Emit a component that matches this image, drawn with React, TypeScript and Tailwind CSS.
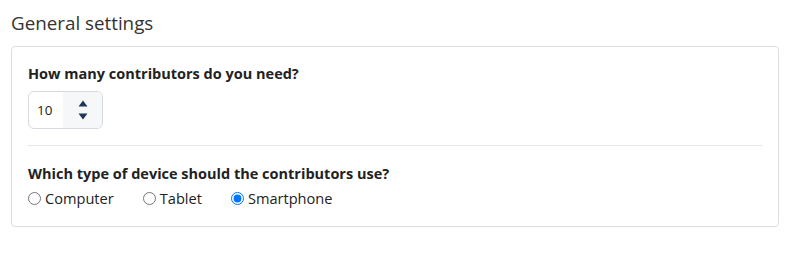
import React from "react";

export default function App() {
  const font = { fontFamily: '"Open Sans", "Lato", sans-serif' };
  return (
    <div className="w-[798px] h-[254px] bg-white text-[#222]" style={font}>
      <div className="pl-[11px] pt-[11px]">
        <h1 className="text-[18.8px] leading-[24px] text-[#333] font-normal">General settings</h1>
      </div>
      <div className="ml-[11px] mt-[11px] w-[768px] rounded-[4px] border border-[#dcdee3] px-[16px] pt-[17px] pb-[18px]">
        <div className="text-[14.5px] leading-[20px] font-bold text-[#222]">How many contributors do you need?</div>
        <div className="mt-[7px] flex h-[38px] w-[75px] overflow-hidden rounded-[6px] border border-[#d6d9de]">
          <div className="flex w-[34px] items-center pl-[8px] text-[13.5px] text-[#222]">10</div>
          <div className="flex flex-1 flex-col items-center justify-center gap-[6px] bg-[#f6f7f9]">
            <svg width="10" height="7" viewBox="0 0 10 7">
              <path d="M5 0.5 L9.5 6.5 H0.5 Z" fill="#1d3557" />
            </svg>
            <svg width="10" height="7" viewBox="0 0 10 7">
              <path d="M0.5 0.5 H9.5 L5 6.5 Z" fill="#1d3557" />
            </svg>
          </div>
        </div>
        <div className="mt-[16px] h-px bg-[#e6e7ea]" />
        <div className="mt-[18px] text-[14.5px] leading-[20px] font-bold text-[#222]">Which type of device should the contributors use?</div>
        <div className="mt-[4px] flex items-center text-[14.6px] leading-[20px] text-[#222]">
          {[
            ["Computer", false],
            ["Tablet", false],
            ["Smartphone", true],
          ].map(([label, checked]) => (
            <label key={label as string} className="mr-[29px] flex items-center gap-[4px]">
              <input type="radio" name="device" defaultChecked={checked as boolean} className="h-[13px] w-[13px]" />
              <span>{label as string}</span>
            </label>
          ))}
        </div>
      </div>
    </div>
  );
}
